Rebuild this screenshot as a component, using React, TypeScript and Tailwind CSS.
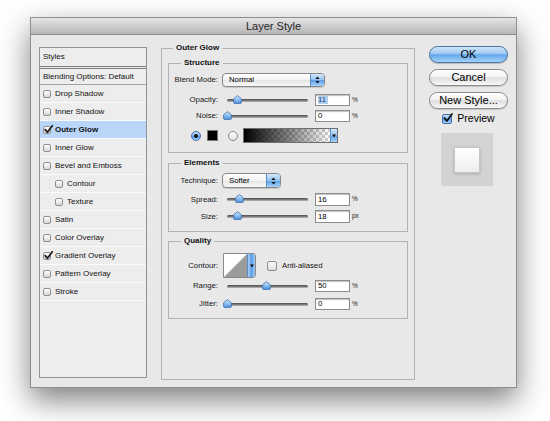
import React from 'react';

const F = "font-['Liberation_Sans',Arial,Helvetica,sans-serif]";

function ListCheck({ checked }: { checked?: boolean }) {
  return (
    <span className="relative block h-[8px] w-[8px] shrink-0 rounded-[2px] border border-[#8f8f8f] bg-[linear-gradient(to_bottom,#ffffff,#d6d6d6)]">
      {checked && (
        <svg className="absolute left-[0px] top-[-2px]" width="9" height="9" viewBox="0 0 9 9">
          <path d="M1.2 4.6 L3.4 7.3 L8.3 0.8" stroke="#1a1a1a" strokeWidth="1.7" fill="none" strokeLinecap="round" strokeLinejoin="round" />
        </svg>
      )}
    </span>
  );
}

type Item = { label: string; checked?: boolean; selected?: boolean; bold?: boolean; indent?: boolean };
const items: Item[] = [
  { label: 'Drop Shadow' },
  { label: 'Inner Shadow' },
  { label: 'Outer Glow', checked: true, selected: true, bold: true },
  { label: 'Inner Glow' },
  { label: 'Bevel and Emboss' },
  { label: 'Contour', indent: true },
  { label: 'Texture', indent: true },
  { label: 'Satin' },
  { label: 'Color Overlay' },
  { label: 'Gradient Overlay', checked: true },
  { label: 'Pattern Overlay' },
  { label: 'Stroke' },
];

function Thumb({ left }: { left: number }) {
  return (
    <svg className="absolute top-[1px]" style={{ left: left - 4.5 }} width="9" height="9" viewBox="0 0 9 9">
      <defs>
        <linearGradient id="thumbG" x1="0" y1="0" x2="0" y2="1">
          <stop offset="0" stopColor="#d6eafe" />
          <stop offset="0.5" stopColor="#8ec1f3" />
          <stop offset="1" stopColor="#4f8fdc" />
        </linearGradient>
      </defs>
      <path d="M4.5 0.6 L8.4 3.8 V7.4 Q8.4 8.4 7.4 8.4 H1.6 Q0.6 8.4 0.6 7.4 V3.8 Z" fill="url(#thumbG)" stroke="#3a6aa8" strokeWidth="0.8" />
    </svg>
  );
}

function Slider({ pos }: { pos: number }) {
  return (
    <div className="relative ml-[4px] flex h-full w-[88px] items-center">
      <div className="ml-[5px] h-[3px] w-[81px] rounded-full bg-[linear-gradient(to_bottom,#4a4a4a,#7d7d7d_55%,#bcbcbc)]" />
      <Thumb left={pos} />
    </div>
  );
}

function Field({ value, unit, sel }: { value: string; unit: string; sel?: boolean }) {
  return (
    <>
      <div className="ml-[5px] flex h-full w-[35px] items-center border border-[#8d8d8d] bg-white pl-[2px] text-[7.75px] leading-none text-black shadow-[inset_0_1px_1px_rgba(0,0,0,0.25)]">
        <span className={sel ? 'bg-[#b4cfee] pr-[2px] text-[#1c3f7a]' : ''}>{value}</span>
      </div>
      <span className="ml-[2px] text-[6.5px] leading-none text-[#222]">{unit}</span>
    </>
  );
}

function Row({ label, children, className }: { label: string; children: React.ReactNode; className: string }) {
  return (
    <div className={`flex items-center ${className}`}>
      <span className="w-[49px] shrink-0 text-right text-[7.75px] leading-none text-[#151515]">{label}</span>
      {children}
    </div>
  );
}

function Arrows() {
  return (
    <svg width="5" height="8" viewBox="0 0 5 8">
      <path d="M2.5 0.5 L4.6 3 H0.4 Z" fill="#111" />
      <path d="M2.5 7.5 L4.6 5 H0.4 Z" fill="#111" />
    </svg>
  );
}

function Popup({ text, className }: { text: string; className: string }) {
  return (
    <div className={`ml-[4px] flex h-full items-center overflow-hidden rounded-[4px] border border-[#888] bg-[linear-gradient(to_bottom,#ffffff,#f3f3f3_50%,#e5e5e5_52%,#f8f8f8)] shadow-[0_1px_1px_rgba(0,0,0,0.15)] ${className}`}>
      <span className="flex-1 pl-[6px] text-[7.75px] leading-none text-black">{text}</span>
      <span className="flex h-full w-[14px] items-center justify-center border-l border-[#5c8cc6] bg-[linear-gradient(to_bottom,#d3e7fb,#93c2f1_50%,#5f9fe6_52%,#a6d2fb)]">
        <Arrows />
      </span>
    </div>
  );
}

function Legend({ children, className }: { children: React.ReactNode; className: string }) {
  return <legend className={`px-[3px] text-[8px] font-bold leading-[10px] text-[#111] ${className}`}>{children}</legend>;
}

function GradientBar() {
  return (
    <div className="ml-[5px] flex h-full w-[95px] overflow-hidden border border-[#6f6f6f] bg-white">
      <svg width="86" height="13" viewBox="0 0 86 13" className="block">
        <defs>
          <pattern id="chk" width="6" height="6" patternUnits="userSpaceOnUse">
            <rect width="6" height="6" fill="#ffffff" />
            <rect width="3" height="3" fill="#cfcfcf" />
            <rect x="3" y="3" width="3" height="3" fill="#cfcfcf" />
          </pattern>
          <linearGradient id="blk" x1="0" y1="0" x2="1" y2="0">
            <stop offset="0" stopColor="#000" stopOpacity="1" />
            <stop offset="1" stopColor="#000" stopOpacity="0" />
          </linearGradient>
        </defs>
        <rect width="86" height="13" fill="url(#chk)" />
        <rect width="86" height="13" fill="url(#blk)" />
      </svg>
      <span className="flex h-full flex-1 items-center justify-center border-l border-[#5c8cc6] bg-[linear-gradient(to_bottom,#d3e7fb,#93c2f1_50%,#5f9fe6_52%,#a6d2fb)]">
        <svg width="4" height="4" viewBox="0 0 4 4">
          <path d="M0 0.5 H4 L2 3.5 Z" fill="#111" />
        </svg>
      </span>
    </div>
  );
}

function Radio({ on, className }: { on?: boolean; className?: string }) {
  return on ? (
    <span className={`flex h-[10px] w-[10px] shrink-0 items-center justify-center rounded-full border border-[#3e6fae] bg-[linear-gradient(to_bottom,#cfe5fc,#7fb6ee_50%,#5a9be3_55%,#a9d3fb)] ${className ?? ''}`}>
      <span className="block h-[4px] w-[4px] rounded-full bg-[#111]" />
    </span>
  ) : (
    <span className={`block h-[10px] w-[10px] shrink-0 rounded-full border border-[#8a8a8a] bg-[linear-gradient(to_bottom,#ffffff,#e2e2e2)] ${className ?? ''}`} />
  );
}

export default function App() {
  return (
    <div className={`h-[421px] w-[550px] overflow-hidden bg-white pl-[30px] pt-[17px] ${F}`}>
      <div className="flex h-[371px] w-[487px] flex-col border border-[#8e8e8e] bg-[#e8e8e8] shadow-[0_12px_28px_rgba(0,0,0,0.5)]">
        {/* title bar */}
        <div className="flex h-[17px] shrink-0 items-center justify-center border-b border-[#8a8a8a] bg-[linear-gradient(to_bottom,#e6e6e6,#cdcdcd_50%,#b6b6b6)]">
          <span className="text-[11px] leading-none text-[#262626]">Layer Style</span>
        </div>
        {/* body */}
        <div className="flex items-start pl-[8px] pt-[8px]">
          {/* styles list */}
          <div className="mt-[4px] h-[331px] w-[108px] shrink-0 border border-[#939393] bg-[#ededed]">
            <div className="flex h-[18px] items-center pl-[3px] text-[8px] leading-none text-[#111]">Styles</div>
            <div className="border-b-[3px] border-double border-[#7d7d7d]" />
            <div className="flex h-[16px] items-center border-b border-[#a3a3a3] pl-[3px] text-[8px] leading-none text-[#111]">
              Blending Options: Default
            </div>
            {items.map((it) => (
              <div
                key={it.label}
                className={`flex h-[18px] items-center gap-[4px] border-b border-[#fbfbfb] ${it.selected ? 'bg-[#b9d6f8]' : ''} ${it.indent ? 'pl-[15px]' : 'pl-[3px]'}`}
              >
                <ListCheck checked={it.checked} />
                <span className={`text-[8px] leading-none text-[#111] ${it.bold ? 'font-bold' : ''}`}>{it.label}</span>
              </div>
            ))}
          </div>

          {/* Outer Glow group */}
          <fieldset className="ml-[14px] h-[337px] w-[254px] shrink-0 border border-[#b1b1b1] px-[6px]">
            <Legend className="ml-[5px]">Outer Glow</Legend>

            <fieldset className="mt-[5px] border border-[#b1b1b1] pb-[9px]">
              <Legend className="ml-[12px]">Structure</Legend>
              <Row label="Blend Mode:" className="mt-[5px] h-[14px]">
                <Popup text="Normal" className="w-[103px]" />
              </Row>
              <Row label="Opacity:" className="mt-[7px] h-[12px]">
                <Slider pos={15} />
                <Field value="11" unit="%" sel />
              </Row>
              <Row label="Noise:" className="mt-[4px] h-[12px]">
                <Slider pos={5} />
                <Field value="0" unit="%" />
              </Row>
              <div className="mt-[6px] flex h-[15px] items-center pl-[22px]">
                <Radio on />
                <span className="ml-[6px] block h-[11px] w-[11px] border border-[#777] bg-black" />
                <Radio className="ml-[10px]" />
                <GradientBar />
              </div>
            </fieldset>

            <fieldset className="mt-[5px] border border-[#b1b1b1] pb-[8px]">
              <Legend className="ml-[12px]">Elements</Legend>
              <Row label="Technique:" className="mt-[5px] h-[15px]">
                <Popup text="Softer" className="w-[59px]" />
              </Row>
              <Row label="Spread:" className="mt-[5px] h-[13px]">
                <Slider pos={17} />
                <Field value="16" unit="%" />
              </Row>
              <Row label="Size:" className="mt-[4px] h-[13px]">
                <Slider pos={15} />
                <Field value="18" unit="px" />
              </Row>
            </fieldset>

            <fieldset className="mt-[4px] border border-[#b1b1b1] pb-[8px]">
              <Legend className="ml-[12px]">Quality</Legend>
              <Row label="Contour:" className="mt-[7px] h-[25px]">
                <div className="ml-[5px] flex h-full w-[33px] overflow-hidden rounded-r-[3px] border border-[#8a8a8a] bg-white">
                  <svg width="23" height="23" viewBox="0 0 23 23" className="block">
                    <path d="M0 23 L23 0 V23 Z" fill="#9b9b9b" />
                  </svg>
                  <span className="flex h-full flex-1 items-center justify-center border-l border-[#5c8cc6] bg-[linear-gradient(to_right,#a9d0f7,#5d9ee6_50%,#9dcbf8)]">
                    <svg width="4" height="4" viewBox="0 0 4 4">
                      <path d="M0 0.5 H4 L2 3.5 Z" fill="#111" />
                    </svg>
                  </span>
                </div>
                <span className="ml-[11px] block h-[10px] w-[10px] rounded-[2px] border border-[#8d8d8d] bg-[linear-gradient(to_bottom,#ffffff,#dcdcdc)]" />
                <span className="ml-[5px] text-[7.75px] leading-none text-[#151515]">Anti-aliased</span>
              </Row>
              <Row label="Range:" className="mt-[2px] h-[12px]">
                <Slider pos={44} />
                <Field value="50" unit="%" />
              </Row>
              <Row label="Jitter:" className="mt-[6px] h-[12px]">
                <Slider pos={5} />
                <Field value="0" unit="%" />
              </Row>
            </fieldset>
          </fieldset>

          {/* buttons */}
          <div className="ml-[14px] mt-[3px] flex w-[79px] shrink-0 flex-col">
            <div className="flex h-[17px] items-center justify-center rounded-full border border-[#48729f] bg-[linear-gradient(to_bottom,#d0e6fc,#9cc8f4_45%,#64a6ea_52%,#a3d3fb)] text-[11px] leading-none text-black shadow-[0_1px_1px_rgba(0,0,0,0.2)]">
              OK
            </div>
            <div className="mt-[6px] flex h-[17px] items-center justify-center rounded-full border border-[#8a8a8a] bg-[linear-gradient(to_bottom,#ffffff,#f2f2f2_45%,#dedede_52%,#f9f9f9)] text-[11px] leading-none text-black shadow-[0_1px_1px_rgba(0,0,0,0.15)]">
              Cancel
            </div>
            <div className="mt-[6px] flex h-[17px] items-center justify-center rounded-full border border-[#8a8a8a] bg-[linear-gradient(to_bottom,#ffffff,#f2f2f2_45%,#dedede_52%,#f9f9f9)] text-[11px] leading-none text-black shadow-[0_1px_1px_rgba(0,0,0,0.15)]">
              New Style...
            </div>
            <div className="mt-[4px] flex h-[11px] items-center justify-center gap-[5px]">
              <span className="relative block h-[10px] w-[10px] rounded-[2px] border border-[#3e6fae] bg-[linear-gradient(to_bottom,#cfe5fc,#7fb6ee_50%,#5a9be3_55%,#a9d3fb)]">
                <svg className="absolute left-[0px] top-[-2px]" width="10" height="10" viewBox="0 0 10 10">
                  <path d="M1.5 5 L3.8 8 L9 1" stroke="#111" strokeWidth="1.8" fill="none" strokeLinecap="round" strokeLinejoin="round" />
                </svg>
              </span>
              <span className="text-[10.5px] leading-none text-black">Preview</span>
            </div>
            <div className="ml-[12px] mt-[9px] flex h-[53px] w-[52px] items-center justify-center bg-[#d3d3d3]">
              <div className="h-[26px] w-[26px] border border-[#c6c6c6] bg-[linear-gradient(to_bottom,#ffffff,#ededed)] shadow-[0_1px_3px_rgba(0,0,0,0.2)]" />
            </div>
          </div>
        </div>
      </div>
    </div>
  );
}
